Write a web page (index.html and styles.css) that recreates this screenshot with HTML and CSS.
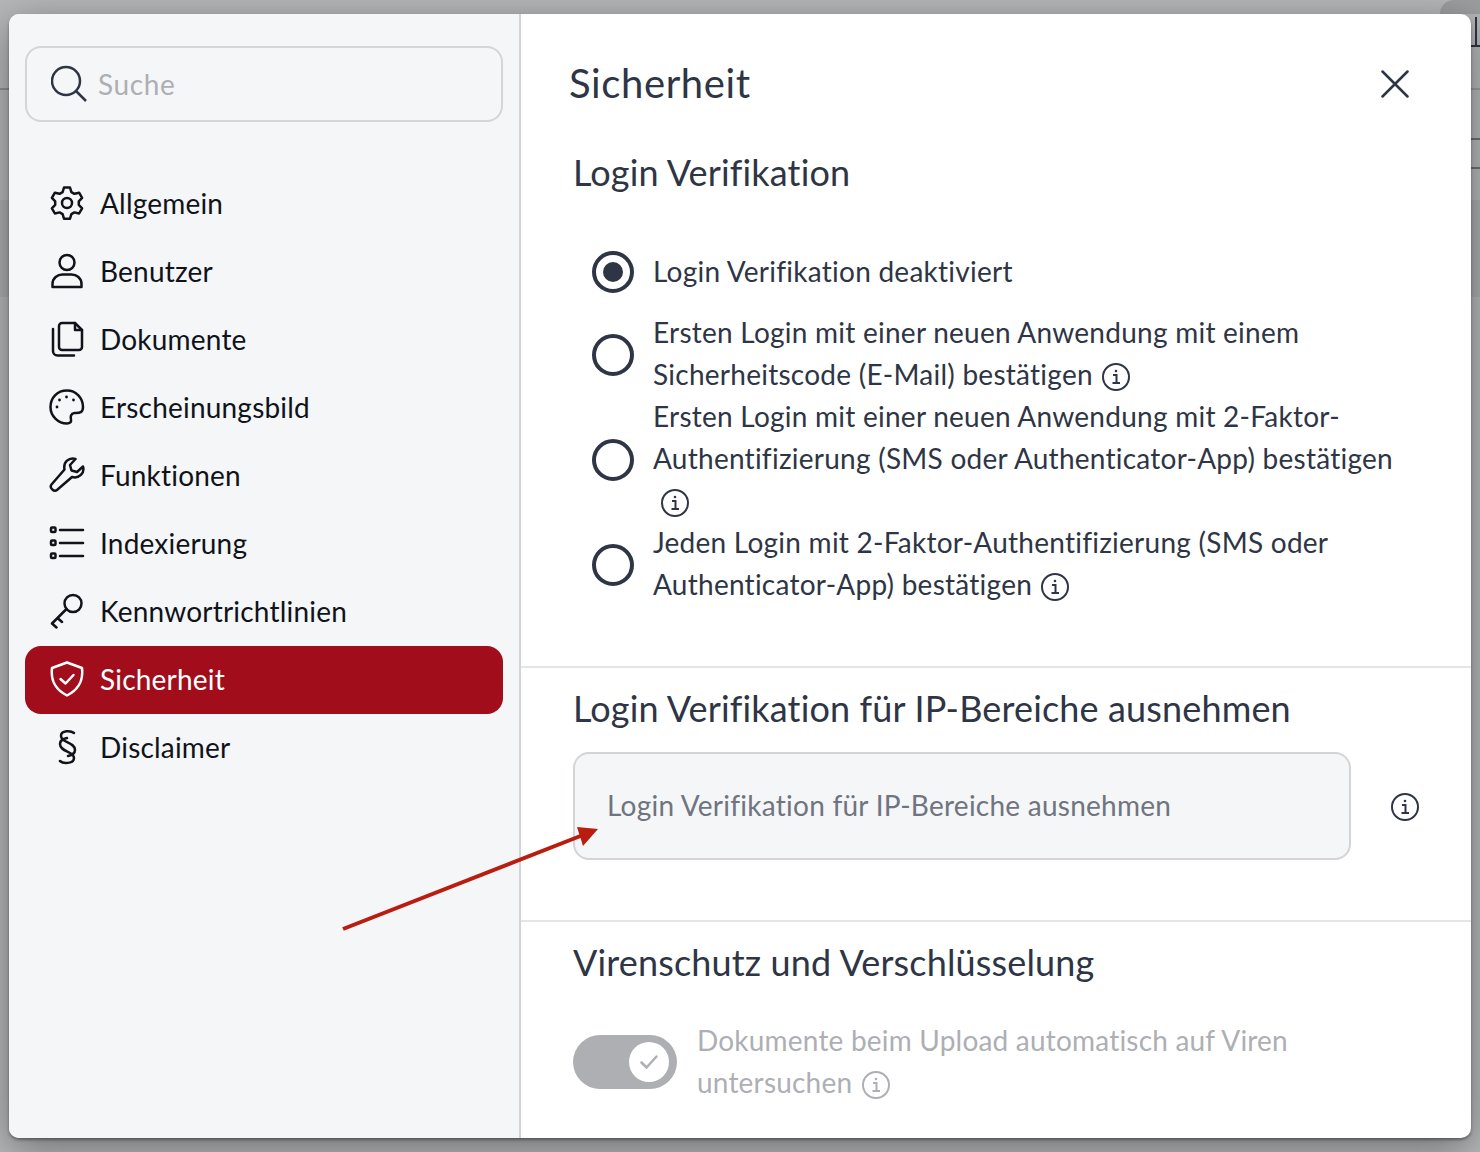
FILE: index.html
```html
<!DOCTYPE html>
<html lang="de">
<head>
    <meta charset="UTF-8">
    <title>Sicherheit</title>
    <link rel="stylesheet" href="styles.css">
</head>
<body>
    <div class="backdrop">
        <div class="bg-corner"></div>
        <div class="bg-band"></div>
        <div class="bg-line line-r0"></div>
        <div class="bg-line line-r1"></div>
        <div class="bg-line line-r2"></div>
        <div class="bg-line line-r3"></div>
        <div class="bg-line line-l1"></div>
        <div class="bg-glyph"></div>
    </div>

    <div class="modal">
        <aside class="sidebar">
            <div class="search">
                <svg class="search-icon" width="38" height="38" viewBox="0 0 38 38"><circle cx="15" cy="16" r="14"/><path d="M25 26L35 36"/></svg>
                <span>Suche</span>
            </div>
            <nav class="menu">
                <a class="item">
                    <svg viewBox="0 0 36 36"><path d="M15 2.500h6l1.400 4.600 3 1.700 4.700-1.100 3 5.200-3.300 3.500v3.400l3.300 3.500-3 5.200-4.700-1.100-3 1.700-1.400 4.600h-6l-1.400-4.600-3-1.700-4.700 1.100-3-5.200 3.300-3.500v-3.400l-3.300-3.500 3-5.200 4.700 1.100 3-1.700z"/><circle cx="18" cy="18" r="5"/></svg>
                    Allgemein
                </a>
                <a class="item">
                    <svg viewBox="0 0 36 36"><circle cx="18" cy="9.500" r="7.500"/><path d="M3.500 34v-3c0-6 5-9.500 10-9.500h9c5 0 10 3.500 10 9.500v3z"/></svg>
                    Benutzer
                </a>
                <a class="item">
                    <svg viewBox="0 0 36 36"><path d="M10 5a3 3 0 0 1 3-3h13l7 7v17a3 3 0 0 1-3 3H13a3 3 0 0 1-3-3z"/><path d="M26 2v7h7"/><path d="M4 8v22a4.500 4.500 0 0 0 4.500 4.500H25"/></svg>
                    Dokumente
                </a>
                <a class="item">
                    <svg viewBox="0 0 36 36"><path d="M18 1.500C8 1.500 1.500 9 1.500 18S9 34.500 18 34.500c3 0 4.500-1.500 4-4-.6-2.500-.5-6 3.500-6.500 4-.2 8.500.5 8.500-6C34 9 27 1.500 18 1.500z"/><circle class="dot" cx="8" cy="18" r="1.400"/><circle class="dot" cx="10.500" cy="11" r="1.400"/><circle class="dot" cx="17.500" cy="8" r="1.400"/><circle class="dot" cx="24.500" cy="11" r="1.400"/></svg>
                    Erscheinungsbild
                </a>
                <a class="item">
                    <svg viewBox="0 0 36 36"><path d="M34 9.500l-6 5.500-5.500-1.500L21 8l5.500-6C20 0 14 5 15.500 12.500L2.500 27.500c-2.500 3 2.500 8 5.500 5.500L23 20c7 2 13-4 11-10.500z"/></svg>
                    Funktionen
                </a>
                <a class="item">
                    <svg viewBox="0 0 36 36"><rect x="2" y="2.500" width="4.500" height="4.500" rx="1"/><rect x="2" y="15.500" width="4.500" height="4.500" rx="1"/><rect x="2" y="28.500" width="4.500" height="4.500" rx="1"/><path d="M11 5h23M11 18h23M11 31h23"/></svg>
                    Indexierung
                </a>
                <a class="item">
                    <svg viewBox="0 0 36 36"><circle cx="24" cy="10.500" r="8.500"/><path d="M17.500 16L3 30.500M3 30.500l4.500 4M8.500 25l4.500 4"/></svg>
                    Kennwortrichtlinien
                </a>
                <a class="item active">
                    <svg viewBox="0 0 36 36"><path d="M18 1.500L33 7c1 9 0 20-15 27.500C3 27 2 16 3 7z"/><path d="M11.500 18l5 4.500 8-8.500"/></svg>
                    Sicherheit
                </a>
                <a class="item">
                    <svg viewBox="0 0 36 36"><path d="M25 4c-3-2.500-13-3-13 3 0 7 14 6 14 14 0 4-3 5-7 6"/><path d="M11 32c3 3 14 3 14-3 0-7-14-6-14-14 0-4 3-5 7-6"/></svg>
                    Disclaimer
                </a>
            </nav>
        </aside>

        <main class="content">
            <header class="title-row">
                <h1>Sicherheit</h1>
                <svg class="close" width="28" height="28" viewBox="0 0 28 28"><path d="M1.500 1.500l25 25M26.500 1.500l-25 25"/></svg>
            </header>

            <section class="section first">
                <h2>Login Verifikation</h2>
                <div class="options">
                    <div class="option one-line">
                        <span class="radio checked"></span>
                        <p>Login Verifikation deaktiviert</p>
                    </div>
                    <div class="option">
                        <span class="radio"></span>
                        <p>Ersten Login mit einer neuen Anwendung mit einem<br>Sicherheitscode (E-Mail) bestätigen <svg class="info" viewBox="0 0 28 28"><circle cx="14" cy="14" r="13"/><path d="M11 12h3.500v8M10.500 20h7.500"/><circle class="i-dot" cx="14" cy="8" r="1.300"/></svg></p>
                    </div>
                    <div class="option">
                        <span class="radio"></span>
                        <p>Ersten Login mit einer neuen Anwendung mit 2-Faktor-<br>Authentifizierung (SMS oder Authenticator-App) bestätigen<br><svg class="info indent" viewBox="0 0 28 28"><circle cx="14" cy="14" r="13"/><path d="M11 12h3.500v8M10.500 20h7.500"/><circle class="i-dot" cx="14" cy="8" r="1.300"/></svg></p>
                    </div>
                    <div class="option">
                        <span class="radio"></span>
                        <p>Jeden Login mit 2-Faktor-Authentifizierung (SMS oder<br>Authenticator-App) bestätigen <svg class="info" viewBox="0 0 28 28"><circle cx="14" cy="14" r="13"/><path d="M11 12h3.500v8M10.500 20h7.500"/><circle class="i-dot" cx="14" cy="8" r="1.300"/></svg></p>
                    </div>
                </div>
            </section>

            <section class="section ip">
                <h2>Login Verifikation für IP-Bereiche ausnehmen</h2>
                <div class="ip-row">
                    <div class="ip-input"><span>Login Verifikation für IP-Bereiche ausnehmen</span></div>
                    <svg class="info" viewBox="0 0 28 28"><circle cx="14" cy="14" r="13"/><path d="M11 12h3.500v8M10.500 20h7.500"/><circle class="i-dot" cx="14" cy="8" r="1.300"/></svg>
                </div>
            </section>

            <section class="section virus">
                <h2>Virenschutz und Verschlüsselung</h2>
                <div class="toggle-row">
                    <div class="toggle">
                        <span class="knob"><svg width="20" height="16" viewBox="0 0 20 16"><path d="M2.500 8.500l5 5 10-11"/></svg></span>
                    </div>
                    <p>Dokumente beim Upload automatisch auf Viren<br>untersuchen <svg class="info" viewBox="0 0 28 28"><circle cx="14" cy="14" r="13"/><path d="M11 12h3.500v8M10.500 20h7.500"/><circle class="i-dot" cx="14" cy="8" r="1.300"/></svg></p>
                </div>
            </section>
        </main>
    </div>

    <!-- annotation arrow -->
    <svg class="arrow" width="270" height="110" viewBox="0 0 270 110">
        <path d="M2 99L242 5" stroke="#b81d10" stroke-width="4"/>
        <polygon points="257,-1 236,-3 242,16" fill="#b81d10"/>
    </svg>
</body>
</html>
```

FILE: styles.css
```css
* {
    box-sizing: border-box;
}

body {
    margin: 0;
    width: 1480px;
    height: 1152px;
    overflow: hidden;
    position: relative;
    padding: 14px 9px;
    font-family: 'Lato', sans-serif;
    font-variant-ligatures: none;
    color: #2e3545;
}

p, h1, h2 {
    margin: 0;
    font-weight: 400;
}

/* dimmed page behind the modal */
.backdrop {
    position: absolute;
    inset: 0;
    background: #b6b7b9;
}

.bg-corner {
    position: absolute;
    top: 0;
    right: 0;
    width: 40px;
    height: 14px;
    background: #9d9ea0;
    border-top-left-radius: 14px;
}

.bg-band {
    position: absolute;
    left: 0;
    right: 0;
    top: 200px;
    height: 97px;
    background: rgba(0, 0, 0, 0.05);
}

.bg-line {
    position: absolute;
    height: 2px;
    background: #8e8f92;
}

.line-r0 { right: 0; width: 9px; top: 88px; background: #9b9c9f; }
.line-r1 { right: 0; width: 9px; top: 45px; background: #2f3542; }
.line-r2 { right: 0; width: 9px; top: 138px; background: #6f7073; }
.line-r3 { right: 0; width: 9px; top: 167px; background: #6f7073; }
.line-l1 { left: 0; width: 9px; top: 88px; }

.bg-glyph {
    position: absolute;
    top: 17px;
    right: 3px;
    width: 2px;
    height: 28px;
    background: #2f3542;
}

.modal {
    position: relative;
    display: flex;
    width: 1462px;
    height: 1124px;
    background: #fff;
    border-radius: 10px;
    overflow: hidden;
    box-shadow: 0 2px 3px rgba(0, 0, 0, 0.35), 0 10px 40px rgba(0, 0, 0, 0.4);
}

.sidebar {
    width: 512px;
    flex-shrink: 0;
    padding: 32px 16px 0;
    background: #f5f6f8;
    border-right: 2px solid #d2d4d8;
}

.search {
    display: flex;
    align-items: center;
    gap: 9px;
    height: 76px;
    padding: 0 24px;
    border: 2px solid #d3d5d9;
    border-radius: 16px;
    font-size: 28px;
    letter-spacing: 0.6px;
    color: #adafb4;
}

.search-icon {
    flex-shrink: 0;
    fill: none;
    stroke: #2e3545;
    stroke-width: 2.500;
}

.menu {
    margin-top: 48px;
}

.item {
    display: flex;
    align-items: center;
    gap: 15px;
    height: 68px;
    padding: 0 24px 2px;
    border-radius: 16px;
    font-size: 28px;
    letter-spacing: 0.2px;
    color: #10131a;
}

.item svg {
    width: 36px;
    height: 36px;
    flex-shrink: 0;
    fill: none;
    stroke: #10131a;
    stroke-width: 2.500;
    stroke-linejoin: round;
    stroke-linecap: round;
}

.item .dot {
    fill: #10131a;
    stroke: none;
}

.item.active {
    background: #a20d1c;
    color: #fff;
}

.item.active svg {
    stroke: #fff;
}

.content {
    flex: 1;
}

.title-row {
    display: flex;
    align-items: center;
    justify-content: space-between;
    height: 140px;
    padding: 0 62px 0 48px;
}

.title-row h1 {
    margin-bottom: 3px;
    font-size: 40px;
    letter-spacing: 0.6px;
    color: #2e3545;
}

.section {
    padding: 0 52px;
    border-bottom: 2px solid #e4e5e8;
}

.close {
    fill: none;
    stroke: #2e3545;
    stroke-width: 2.500;
    stroke-linecap: round;
}

.section h2 {
    font-size: 36px;
    line-height: 44px;
    letter-spacing: 0.15px;
    color: #2e3545;
}

.first {
    height: 518px;
}

.first h2 {
    margin-top: -4px;
}

.options {
    margin-top: 55px;
    padding-left: 19px;
}

.option {
    display: flex;
    align-items: center;
    gap: 19px;
    font-size: 28px;
    line-height: 42px;
    letter-spacing: 0.25px;
}

.option.one-line {
    margin-bottom: 18px;
}

.radio {
    width: 42px;
    height: 42px;
    margin-top: 4px;
    flex-shrink: 0;
    border: 4px solid #2e3545;
    border-radius: 50%;
    position: relative;
}

.radio.checked {
    margin-top: 2px;
}

.radio.checked::after {
    content: "";
    position: absolute;
    inset: 7px;
    border-radius: 50%;
    background: #2e3545;
}

.info {
    width: 28px;
    height: 28px;
    vertical-align: -6px;
    margin-left: 2px;
    fill: none;
    stroke: #2e3545;
    stroke-width: 2;
}

.info .i-dot {
    fill: #2e3545;
    stroke: none;
}

.info.indent {
    margin-left: 8px;
}

.ip {
    height: 254px;
    padding-top: 18px;
}

.ip-row {
    display: flex;
    align-items: center;
    margin-top: 22px;
}

.ip-input {
    display: flex;
    align-items: center;
    width: 778px;
    height: 108px;
    padding: 0 32px 2px;
    background: #f5f6f8;
    border: 2px solid #d2d4d8;
    border-radius: 16px;
    font-size: 28px;
    letter-spacing: 0.25px;
    color: #6f7480;
}

.ip-row .info {
    margin-left: 40px;
    margin-top: 2px;
}

.virus {
    border-bottom: 0;
    padding-top: 18px;
}

.toggle-row {
    display: flex;
    align-items: center;
    gap: 20px;
    margin-top: 35px;
    font-size: 28px;
    line-height: 42px;
    letter-spacing: 0.2px;
    color: #adafb4;
}

.toggle {
    display: flex;
    align-items: center;
    justify-content: flex-end;
    width: 104px;
    height: 54px;
    margin-top: 2px;
    padding-right: 8px;
    background: #aeafb3;
    border-radius: 27px;
    flex-shrink: 0;
}

.knob {
    display: flex;
    align-items: center;
    justify-content: center;
    width: 40px;
    height: 40px;
    background: #fff;
    border-radius: 50%;
}

.knob svg {
    fill: none;
    stroke: #aeafb3;
    stroke-width: 2.500;
    stroke-linecap: round;
}

.toggle-row .info {
    stroke: #adafb4;
}

.toggle-row .info .i-dot {
    fill: #adafb4;
}

.arrow {
    position: absolute;
    left: 341px;
    top: 830px;
    overflow: visible;
}
```
